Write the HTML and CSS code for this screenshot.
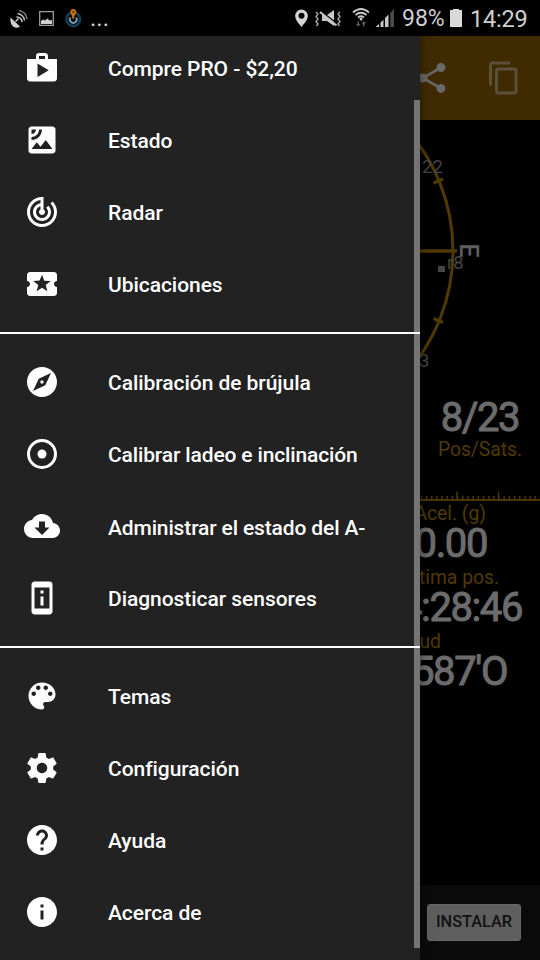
FILE: index.html
```html
<!DOCTYPE html>
<html lang="es">
<head>
<meta charset="utf-8">
<title>GPS Status</title>
<link rel="stylesheet" href="styles.css">
</head>
<body>
<div class="phone">
  <header class="status">
    <svg class="status-left" width="90" height="36" viewBox="0 0 90 36">
      <g fill="none" stroke="#c4c4c4" stroke-width="1.6">
        <path d="M16.500 17a5 5 0 0 1 5.500 5"/><path d="M17.500 13.500a8 8 0 0 1 7 7" /><path d="M19 10.500a10 10 0 0 1 8 8.500" stroke="#777"/>
        <path d="M39.700 11.700h13.600v13.600h-13.600z" stroke="#9b9b9b" stroke-width="1.300"/>
      </g>
      <path fill="#d0d0d0" d="M10.500 17.500L20 26.500c-4 3-10.500.500-9.500-9zM15 21l3-3 1 1-3 3zM41 24v-3l2-1.500 2 1 2.500-2 2 2 2.500-.500v4z"/>
      <circle cx="73.300" cy="19.300" r="6.800" fill="none" stroke="#123f55" stroke-width="2.600"/>
      <path d="M70.500 17.500a3.400 3.400 0 1 0 5.600 0" fill="none" stroke="#7699ad" stroke-width="2"/>
      <path d="M73.300 9a3 3 0 0 1 3 3c0 2-2.200 3-2.200 7h-1.600c0-4-2.200-5-2.200-7a3 3 0 0 1 3-3z" fill="#c96d12"/><circle cx="73.300" cy="12" r="1" fill="#4e2b0b"/>
    </svg>
    <span class="more">...</span>
    <svg class="status-right" width="104" height="36" viewBox="292 0 104 36">
      <path fill="#d4d4d4" fill-rule="evenodd" d="M301.500 9.500a6.300 6.300 0 0 1 6.300 6.500c0 4-4 8-6.300 11-2.300-3-6.300-7-6.300-11a6.300 6.300 0 0 1 6.300-6.500zm0 3.300a3 3 0 1 0 0 6 3 3 0 0 0 0-6z"/>
      <path fill="#c8c8c8" d="M322 15h5l7-5v16l-7-5h-5z"/>
      <path d="M320 10.500L337 23.500" stroke="#000" stroke-width="1.500"/>
      <path d="M320 12L336.500 25.500" stroke="#c8c8c8" stroke-width="2"/>
      <path d="M316 12l2 2-2 2.500 2 2.500-2 2.500 2 2.500-1.500 2M340 12l-2 2 2 2.500-2 2.500 2 2.500-2 2.500 1.500 2" fill="none" stroke="#a8a8a8" stroke-width="1.400"/>
      <g fill="none" stroke="#c8c8c8" stroke-width="1.700"><path d="M353 12.500q8-7 16 0M355.500 15q5.500-4.500 11 0M358 17.500q3-2.500 6 0"/></g>
      <circle cx="361" cy="19" r="1.500" fill="#c8c8c8"/>
      <path fill="#626262" d="M357.500 21.500h1.500v2.500h1.500l-2.200 2.500-2.300-2.500h1.500zM363 26.500v-3h-1.500l2.300-2.500 2.200 2.500h-1.500v3z"/>
      <path fill="#c8c8c8" d="M375.500 27l3.500-3v3zM380.500 22.500l3-2.800V27h-3zM385 18l3.500-3.500V27H385z"/>
      <path fill="#4a4a4a" d="M390.300 13l3.700-4v18h-3.700z"/>
    </svg>
    <span class="percent">98%</span>
    <span class="battery"></span>
    <span class="clock">14:29</span>
  </header>

  <div class="screen">
    <main class="app">
      <div class="appbar">
        <svg class="icon" viewBox="0 0 24 24"><path d="M18 16.080c-.76 0-1.440.3-1.960.77L8.910 12.700c.05-.23.09-.46.09-.7s-.04-.47-.09-.7l7.050-4.110c.54.5 1.250.81 2.040.81 1.660 0 3-1.340 3-3s-1.340-3-3-3-3 1.340-3 3c0 .24.04.47.09.7L8.040 9.810C7.500 9.310 6.790 9 6 9c-1.660 0-3 1.340-3 3s1.340 3 3 3c.79 0 1.500-.31 2.040-.81l7.120 4.160c-.05.21-.08.43-.08.65 0 1.610 1.310 2.920 2.920 2.920s2.920-1.310 2.920-2.920-1.310-2.920-2.920-2.920z"/></svg>
        <svg class="icon copy" viewBox="0 0 24 24"><path d="M16 1H4c-1.100 0-2 .9-2 2v14h2V3h12V1zm3 4H8c-1.100 0-2 .9-2 2v14c0 1.100.9 2 2 2h11c1.100 0 2-.9 2-2V7c0-1.100-.9-2-2-2zm0 16H8V7h11v14z"/></svg>
      </div>
      <svg class="dial" viewBox="0 120 540 262">
        <g fill="none" stroke="#513a00" stroke-width="3">
          <circle cx="270" cy="251" r="183"/>
          <path d="M270 251h187" stroke-width="3.500"/>
          <path d="M433.500 183l9.500-4M433.500 318.500l9.500 4"/>
        </g>
        <text x="422" y="173" font-size="18.500" fill="#454545">22</text>
        <text x="419" y="367" font-size="18.500" fill="#454545">3</text>
        <text x="447" y="269" font-size="18.500" fill="#454545">r8</text>
        <rect x="438" y="266" width="7" height="6" fill="#454545"/>
        <text transform="translate(460 243.500) rotate(90)" font-size="26" fill="#606060" font-weight="500" textLength="14" lengthAdjust="spacingAndGlyphs">E</text>
      </svg>
      <section class="sats">
        <div class="value">8/23</div>
        <div class="label">Pos/Sats.</div>
      </section>
      <svg class="ruler" viewBox="0 0 540 12">
        <path d="M0 10h540" stroke="#4d3700" stroke-width="2"/>
        <path d="M421 7.500h119" stroke="#4d3700" stroke-width="3" stroke-dasharray="1.500 3.680" stroke-dashoffset="0.400"/>
        <path d="M457 1.500v8M498.500 1.500v8" stroke="#4d3700" stroke-width="1.500"/>
      </svg>
      <section class="readouts">
        <div class="label acel">Acel. (g)</div>
        <div class="value acel-value">0.00</div>
        <div class="label last">Última pos.</div>
        <div class="value last-value">14:28:46</div>
        <div class="label lon">Longitud</div>
        <div class="value lon-value">58°23.587'O</div>
      </section>
      <footer class="ad"><button class="install">INSTALAR</button></footer>
    </main>

    <nav class="drawer">
      <div class="scrollbar"></div>
      <ul class="group">
        <li><svg class="icon" viewBox="0 0 24 24"><path d="M16 6V4c0-1.110-.89-2-2-2h-4c-1.110 0-2 .89-2 2v2H2v13c0 1.110.89 2 2 2h16c1.110 0 2-.89 2-2V6h-6zm-6-2h4v2h-4V4zM9 18V9l7.500 4.500L9 18z"/></svg><span>Compre PRO - $2,20</span></li>
        <li><svg class="icon" viewBox="0 0 24 24"><path d="M19 3H5c-1.100 0-2 .9-2 2v14c0 1.100.9 2 2 2h14c1.100 0 2-.9 2-2V5c0-1.100-.9-2-2-2zM5 4.990h3C8 6.650 6.660 8 5 8V4.990zM5 12v-2c2.760 0 5-2.250 5-5.010h2C12 8.860 8.870 12 5 12zm0 6l3.500-4.500 2.500 3.010L14.500 12l4.500 6H5z"/></svg><span>Estado</span></li>
        <li><svg class="icon" viewBox="0 0 24 24"><path d="M19.070 4.930l-1.410 1.410C19.100 7.790 20 9.790 20 12c0 4.420-3.580 8-8 8s-8-3.580-8-8c0-4.080 3.050-7.440 7-7.930v2.020C8.160 6.570 6 9.030 6 12c0 3.310 2.690 6 6 6s6-2.690 6-6c0-1.660-.67-3.160-1.760-4.240l-1.410 1.410C15.550 9.900 16 10.900 16 12c0 2.210-1.790 4-4 4s-4-1.790-4-4c0-1.860 1.280-3.410 3-3.860v2.140c-.6.35-1 .98-1 1.720 0 1.100.9 2 2 2s2-.9 2-2c0-.74-.4-1.380-1-1.720V2h-1C6.480 2 2 6.480 2 12s4.480 10 10 10 10-4.480 10-10c0-2.760-1.120-5.260-2.930-7.070z"/></svg><span>Radar</span></li>
        <li><svg class="icon" viewBox="0 0 24 24"><path d="M20 12c0-1.100.9-2 2-2V6c0-1.100-.9-2-2-2H4c-1.100 0-1.990.9-1.990 2v4c1.100 0 1.990.9 1.990 2s-.89 2-2 2v4c0 1.100.9 2 2 2h16c1.100 0 2-.9 2-2v-4c-1.100 0-2-.9-2-2zm-4.420 4.800L12 14.500l-3.580 2.300 1.080-4.120-3.290-2.690 4.240-.25L12 5.800l1.540 3.950 4.240.25-3.290 2.690 1.090 4.110z"/></svg><span>Ubicaciones</span></li>
      </ul>
      <ul class="group">
        <li><svg class="icon" viewBox="0 0 24 24"><path d="M12 10.900c-.61 0-1.100.49-1.100 1.100s.49 1.100 1.100 1.100 1.100-.49 1.100-1.100-.49-1.100-1.100-1.100zM12 2C6.480 2 2 6.480 2 12s4.480 10 10 10 10-4.480 10-10S17.520 2 12 2zm2.190 12.190L6 18l3.810-8.190L18 6l-3.810 8.190z"/></svg><span>Calibración de brújula</span></li>
        <li><svg class="icon" viewBox="0 0 24 24"><circle class="ring" cx="12" cy="12" r="9"/><circle cx="12" cy="12" r="3"/></svg><span class="tight">Calibrar ladeo e inclinación</span></li>
        <li class="low"><svg class="icon" viewBox="0 0 24 24"><path d="M19.350 10.040C18.670 6.590 15.640 4 12 4 9.110 4 6.600 5.640 5.350 8.040 2.340 8.360 0 10.910 0 14c0 3.310 2.690 6 6 6h13c2.760 0 5-2.240 5-5 0-2.640-2.050-4.780-4.650-4.960zM17 13l-5 5-5-5h3V9h4v4h3z"/></svg><span class="tight">Administrar el estado del A-</span></li>
        <li><svg class="icon" viewBox="0 0 24 24"><path d="M13 7h-2v2h2V7zm0 4h-2v6h2v-6zm4-9.990L7 1c-1.100 0-2 .9-2 2v18c0 1.100.9 2 2 2h10c1.100 0 2-.9 2-2V3c0-1.100-.9-1.990-2-1.990zM17 19H7V5h10v14z"/></svg><span>Diagnosticar sensores</span></li>
      </ul>
      <ul class="group">
        <li><svg class="icon" viewBox="0 0 24 24"><path d="M12 3c-4.970 0-9 4.030-9 9s4.030 9 9 9c.83 0 1.500-.67 1.500-1.500 0-.39-.15-.74-.39-1.010-.23-.26-.38-.61-.38-.99 0-.83.67-1.500 1.500-1.500H16c2.760 0 5-2.240 5-5 0-4.420-4.030-8-9-8zm-5.500 9c-.83 0-1.500-.67-1.500-1.500S5.670 9 6.500 9 8 9.670 8 10.500 7.330 12 6.500 12zm3-4C8.670 8 8 7.330 8 6.500S8.670 5 9.500 5s1.500.67 1.500 1.500S10.330 8 9.500 8zm5 0c-.83 0-1.500-.67-1.500-1.500S13.670 5 14.500 5s1.500.67 1.500 1.500S15.330 8 14.500 8zm3 4c-.83 0-1.500-.67-1.500-1.500S16.670 9 17.500 9s1.500.67 1.500 1.500-.67 1.500-1.500 1.500z"/></svg><span>Temas</span></li>
        <li><svg class="icon" viewBox="0 0 24 24"><path d="M19.430 12.980c.04-.32.07-.64.07-.98s-.03-.66-.07-.98l2.110-1.650c.19-.15.24-.42.12-.64l-2-3.460c-.12-.22-.39-.3-.61-.22l-2.490 1c-.52-.4-1.080-.73-1.690-.98l-.38-2.650C14.460 2.180 14.250 2 14 2h-4c-.25 0-.46.18-.49.42l-.38 2.650c-.61.25-1.170.59-1.690.98l-2.490-1c-.23-.09-.49 0-.61.22l-2 3.460c-.13.22-.07.49.12.64l2.110 1.650c-.04.32-.07.65-.07.98s.03.66.07.98l-2.110 1.650c-.19.15-.24.42-.12.64l2 3.460c.12.22.39.3.61.22l2.490-1c.52.4 1.080.73 1.690.98l.38 2.650c.03.24.24.42.49.42h4c.25 0 .46-.18.49-.42l.38-2.650c.61-.25 1.170-.59 1.690-.98l2.490 1c.23.09.49 0 .61-.22l2-3.460c.12-.22.07-.49-.12-.64l-2.110-1.650zM12 15.500c-1.930 0-3.500-1.570-3.500-3.500s1.570-3.500 3.500-3.500 3.500 1.570 3.500 3.500-1.570 3.500-3.500 3.500z"/></svg><span>Configuración</span></li>
        <li><svg class="icon" viewBox="0 0 24 24"><path d="M12 2C6.480 2 2 6.480 2 12s4.480 10 10 10 10-4.480 10-10S17.520 2 12 2zm1 17h-2v-2h2v2zm2.070-7.750l-.9.920C13.450 12.900 13 13.500 13 15h-2v-.5c0-1.100.45-2.100 1.170-2.830l1.240-1.260c.37-.36.59-.86.59-1.410 0-1.100-.9-2-2-2s-2 .9-2 2H8c0-2.210 1.790-4 4-4s4 1.790 4 4c0 .88-.36 1.680-.93 2.250z"/></svg><span>Ayuda</span></li>
        <li><svg class="icon" viewBox="0 0 24 24"><path d="M12 2C6.480 2 2 6.480 2 12s4.480 10 10 10 10-4.480 10-10S17.520 2 12 2zm1 15h-2v-6h2v6zm0-8h-2V7h2v2z"/></svg><span>Acerca de</span></li>
      </ul>
    </nav>
  </div>
</div>
</body>
</html>
```

FILE: styles.css
```css
* { box-sizing: border-box; }

body {
  margin: 0;
  background: #000;
  font-family: Roboto, sans-serif;
}

.phone {
  width: 540px;
  height: 960px;
  display: flex;
  flex-direction: column;
  overflow: hidden;
}

.status {
  height: 36px;
  flex: none;
  display: flex;
  align-items: center;
  color: #cfcfcf;
  font-size: 24px;
  line-height: 36px;
}

.more { width: 202px; font-size: 24px; }
.status-right { flex: none; }
.percent { width: 44px; margin-left: 6px; padding-top: 2px; font-size: 23px; }
.battery {
  width: 12px;
  height: 17px;
  margin-left: 4px;
  background: #dadada;
  position: relative;
}
.battery::before {
  content: "";
  position: absolute;
  left: 3px;
  top: -1px;
  width: 6px;
  height: 1px;
  background: #dadada;
}
.clock { margin-left: 8px; padding-top: 2px; font-size: 23.5px; letter-spacing: -.2px; }

.screen {
  position: relative;
  flex: 1;
  overflow: hidden;
}

.app {
  height: 100%;
  display: flex;
  flex-direction: column;
}

.icon {
  width: 36px;
  height: 36px;
  flex: none;
  fill: #fff;
}
.icon .ring { fill: none; stroke: #fff; stroke-width: 2; }

.appbar {
  height: 84px;
  flex: none;
  display: flex;
  justify-content: flex-end;
  align-items: center;
  gap: 36px;
  padding-right: 18px;
  background: #402b00;
}
.appbar .icon { fill: #696969; }
.appbar .copy { fill: #5b503c; }

.dial {
  width: 540px;
  height: 262px;
  flex: none;
  font-family: Roboto, sans-serif;
}

.value {
  color: #6c6c6c;
  font-size: 40px;
  font-weight: 400;
  -webkit-text-stroke: 1px #6c6c6c;
  line-height: 36px;
  letter-spacing: -1.4px;
  white-space: nowrap;
}
.label {
  color: #513a00;
  font-size: 19.3px;
  line-height: 24px;
  white-space: nowrap;
}

.sats {
  height: 108px;
  flex: none;
  width: 120px;
  margin-left: auto;
  padding-top: 18px;
  text-align: center;
}
.sats .label { margin-top: 2px; }

.ruler { width: 540px; height: 12px; flex: none; }

.readouts { flex: 1; text-align: right; }
.readouts .value { margin-bottom: 4px; }
.acel { padding-right: 54px; }
.acel-value { padding-right: 53px; }
.last { padding-right: 41px; }
.last-value { padding-right: 18px; }
.lon { padding-right: 99px; }
.lon-value { padding-right: 33px; }

.ad {
  height: 75px;
  flex: none;
  display: flex;
  justify-content: flex-end;
  align-items: center;
  padding: 0 19px 0 0;
  background: #0b0b0b;
}
.install {
  width: 94px;
  height: 37px;
  padding: 0 0 2px;
  border: 1px solid #686868;
  border-radius: 3px;
  background: #5e5e5e;
  color: #111;
  font: 500 16.3px/34px Roboto, sans-serif;
}

.drawer {
  position: absolute;
  inset: 0 auto 0 0;
  width: 420px;
  background: #222;
  box-shadow: 0 0 10px rgba(0, 0, 0, .5);
}
.group {
  position: relative;
  margin: 0;
  padding: 12px 0;
  list-style: none;
}
.scrollbar + .group { margin-top: -16px; }
.group + .group { border-top: 2px solid #fff; }
.group li {
  height: 72px;
  display: flex;
  align-items: center;
  gap: 48px;
  padding: 1px 0 0 24px;
  color: #fff;
  font-size: 21px;
  font-weight: 500;
  letter-spacing: -.05px;
  white-space: nowrap;
}
.group li .tight { letter-spacing: -.14px; }
.group li .icon { margin-top: -1px; }
.low span { padding-top: 2px; }

.scrollbar {
  position: absolute;
  right: 0;
  top: 64px;
  width: 6px;
  height: 848px;
  background: #747474;
}
```
